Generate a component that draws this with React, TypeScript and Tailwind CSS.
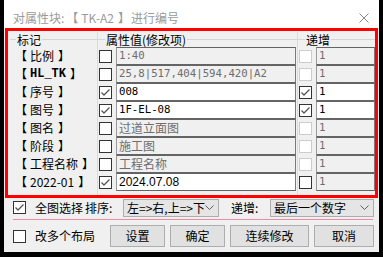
import { ReactNode } from 'react'

const CJK = "font-['Noto_Sans_CJK_SC','Noto_Sans',sans-serif]"
const MONO = "font-['DejaVu_Sans_Mono','Noto_Sans_CJK_SC',monospace]"
const SANS = "font-['Liberation_Sans','Noto_Sans_CJK_SC',sans-serif]"

type Row = {
  name: string
  value: string
  edit: boolean
  inc: boolean
  incEnabled: boolean
  incOn: boolean
  font: 'mono' | 'cjk' | 'sans'
}

const ROWS: Row[] = [
  { name: '比例', value: '1:40', edit: false, inc: false, incEnabled: false, incOn: false, font: 'mono' },
  { name: 'HL_TK', value: '25,8|517,404|594,420|A2', edit: false, inc: false, incEnabled: false, incOn: false, font: 'mono' },
  { name: '序号', value: '008', edit: true, inc: true, incEnabled: true, incOn: true, font: 'mono' },
  { name: '图号', value: '1F-EL-08', edit: true, inc: true, incEnabled: true, incOn: true, font: 'mono' },
  { name: '图名', value: '过道立面图', edit: false, inc: false, incEnabled: false, incOn: false, font: 'cjk' },
  { name: '阶段', value: '施工图', edit: false, inc: false, incEnabled: false, incOn: false, font: 'cjk' },
  { name: '工程名称', value: '工程名称', edit: false, inc: false, incEnabled: false, incOn: false, font: 'cjk' },
  { name: '2022-01', value: '2024.07.08', edit: true, inc: false, incEnabled: true, incOn: false, font: 'sans' },
]

const FONT_CLS = {
  mono: MONO + ' text-[10.7px]',
  cjk: CJK + ' text-[12px]',
  sans: SANS + ' text-[12px]',
}

function Check({ on, disabled }: { on: boolean; disabled?: boolean }) {
  return (
    <span
      className={
        'flex h-[13px] w-[13px] shrink-0 items-center justify-center border ' +
        (disabled ? 'border-[#cccccc] bg-white' : 'border-[#333333] bg-white')
      }
    >
      {on ? (
        <svg viewBox="0 0 11 11" className="h-[11px] w-[11px]">
          <polyline points="1.5,5.5 4,8 9.5,2.5" fill="none" stroke="#555555" strokeWidth="1.3" />
        </svg>
      ) : null}
    </span>
  )
}

function Field({ value, on, font, className }: { value: string; on: boolean; font: Row['font']; className: string }) {
  return (
    <div
      className={
        'flex h-[18px] items-center whitespace-pre border border-y-[#646464] border-l-[#9a9a9a] border-r-[#7a7a7a] pl-[2px] leading-none ' +
        (on ? 'bg-white text-black ' : 'bg-[#f0f0f0] text-[#6d6d6d] ') +
        FONT_CLS[font] +
        ' ' +
        className
      }
    >
      {value}
    </div>
  )
}

function GroupHead({ title, lead }: { title: string; lead: string }) {
  return (
    <div className="flex h-[15px] items-center">
      <div className={'h-px bg-[#d5d5d5] ' + lead} />
      <span className="whitespace-pre px-[1px] text-[12px] leading-none text-black">{title}</span>
      <div className="h-px flex-1 bg-[#d5d5d5]" />
    </div>
  )
}

function Btn({ children, w }: { children: ReactNode; w: string }) {
  return (
    <div
      className={
        'flex h-[22px] items-center justify-center border border-[#adadad] bg-[#e1e1e1] text-[12px] text-black ' + w
      }
    >
      {children}
    </div>
  )
}

function Select({ text, w }: { text: string; w: string }) {
  return (
    <div
      className={
        'flex h-[18px] shrink-0 items-center justify-between border border-[#adadad] bg-[#e5e5e5] pl-[3px] pr-[4px] text-[12px] text-black ' +
        w
      }
    >
      <span className="whitespace-pre leading-none">{text}</span>
      <svg viewBox="0 0 9 5" className="h-[5px] w-[9px]">
        <polyline points="0.5,0.5 4.5,4.5 8.5,0.5" fill="none" stroke="#606060" strokeWidth="1" />
      </svg>
    </div>
  )
}

export default function App() {
  return (
    <div className={'h-[257px] w-[383px] bg-black ' + CJK}>
      <div className="ml-[4px] flex h-[252px] w-[375px] flex-col bg-[#f0f0f0]">
        <div className="flex h-[28px] shrink-0 items-center justify-between bg-white pl-[9px] pr-[10px] pt-[8px]">
          <span className="flex items-center whitespace-pre text-[12px] leading-none text-[#9a9a9a]">
            <span>对属性块:</span>
            <span className="ml-[2px]">【</span>
            <span className="ml-[3px]">TK-A2</span>
            <span className="ml-[4px]">】</span>
            <span className="ml-[1px]">进行编号</span>
          </span>
          <svg viewBox="0 0 10 10" className="h-[10px] w-[10px]">
            <path d="M0.5 0.5 L9.5 9.5 M9.5 0.5 L0.5 9.5" stroke="#8a8a8a" strokeWidth="1" />
          </svg>
        </div>

        <div className="mx-[1px] flex h-[170px] shrink-0 border-[3px] border-[#ff0000] pl-[2px] pt-[1px]">
          <div className="flex w-[87px] flex-col">
            <GroupHead title="标记" lead="w-[6px]" />
            <div className="flex flex-col pl-[5px]">
              {ROWS.map((r) => (
                <div key={r.name} className="flex h-[18px] items-center whitespace-pre text-[12px] leading-none text-black">
                  <span>【</span>
                  {r.name === 'HL_TK' ? (
                    <span className="ml-[3px] font-['Liberation_Mono',monospace] text-[12px] font-bold">{r.name}</span>
                  ) : (
                    <span className="ml-[3px]">{r.name}</span>
                  )}
                  <span className="ml-[4px]">】</span>
                </div>
              ))}
            </div>
          </div>

          <div className="flex w-[200px] flex-col border-l border-[#dcdcdc]">
            <GroupHead title="属性值(修改项)" lead="w-[7px]" />
            <div className="flex flex-col pl-[1px]">
              {ROWS.map((r) => (
                <div key={r.name} className="flex h-[18px] items-center">
                  <Check on={r.edit} />
                  <Field value={r.value} on={r.edit} font={r.font} className="ml-[4px] w-[180px]" />
                </div>
              ))}
            </div>
          </div>

          <div className="flex flex-1 flex-col border-l border-[#dcdcdc]">
            <GroupHead title="递增" lead="w-[7px]" />
            <div className="flex flex-col pl-[1px]">
              {ROWS.map((r) => (
                <div key={r.name} className="flex h-[18px] items-center">
                  <Check on={r.incOn} disabled={!r.incEnabled} />
                  <Field value="1" on={r.inc} font="mono" className="ml-[4px] flex-1" />
                </div>
              ))}
            </div>
          </div>
        </div>

        <div className="flex h-[19px] shrink-0 items-center whitespace-nowrap pl-[9px] text-[12px] text-black">
          <Check on />
          <span className="ml-[9px]">全图选择</span>
          <span className="ml-[2px] w-[38px]">排序:</span>
          <Select text="左=>右,上=>下" w="w-[96px]" />
          <span className="ml-[12px] w-[39px]">递增:</span>
          <Select text="最后一个数字" w="w-[104px]" />
        </div>
        <div className="ml-[9px] mt-[2px] h-px w-[360px] shrink-0 bg-[#f08ca0]" />
        <div className="flex flex-1 items-center whitespace-nowrap pl-[9px] text-[12px] text-black">
          <Check on={false} />
          <span className="ml-[9px]">改多个布局</span>
          <div className="ml-[15px] flex gap-[5px]">
            <Btn w="w-[55px]">设置</Btn>
            <Btn w="w-[55px]">确定</Btn>
            <Btn w="w-[79px]">连续修改</Btn>
            <Btn w="w-[60px]">取消</Btn>
          </div>
        </div>
      </div>
    </div>
  )
}
